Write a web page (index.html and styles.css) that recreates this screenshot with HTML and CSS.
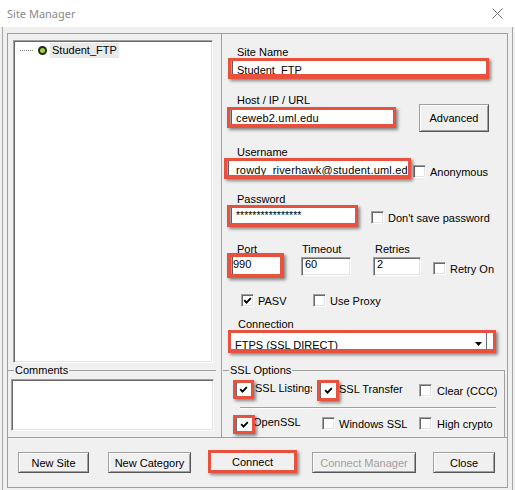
FILE: index.html
```html
<!DOCTYPE html>
<html>
<head>
<meta charset="utf-8">
<title>Site Manager</title>
<link rel="stylesheet" href="styles.css">
</head>
<body>
<div class="titlebar">
  <span class="title">Site Manager</span>
  <svg class="close" width="11" height="11" viewBox="0 0 11 11"><path d="M0.5 0.5L10.5 10.5M10.5 0.5L0.5 10.5" stroke="#6f6f6f" stroke-width="1" fill="none"/></svg>
</div>
<div class="window-body">
  <div class="frame">
    <div class="main">
      <div class="left">
        <div class="tree">
          <div class="tree-item">
            <span class="dots"></span>
            <svg class="node" width="9" height="9" viewBox="0 0 9 9"><circle cx="4.5" cy="4.5" r="3.5" fill="#a6d046" stroke="#1d2b12" stroke-width="2"/></svg>
            <span class="item-label">Student_FTP</span>
          </div>
        </div>
        <div class="group-title comments-title"><span class="gt-text">Comments</span></div>
        <div class="sunken textarea"></div>
      </div>
      <div class="right">
        <div class="lbl">Site Name</div>
        <div class="hl hl-site"><div class="fld fld-low">Student_FTP</div></div>

        <div class="lbl lbl-host">Host / IP / URL</div>
        <div class="row row-host">
          <div class="hl hl-host"><div class="fld fld-host">ceweb2.uml.edu</div></div>
          <div class="btn btn-adv">Advanced</div>
        </div>

        <div class="lbl lbl-user">Username</div>
        <div class="row">
          <div class="hl hl-user"><div class="fld fld-user fld-low">rowdy_riverhawk@student.uml.edu</div></div>
          <div class="chk chk-anon"><span class="cb"></span><span class="cl">Anonymous</span></div>
        </div>

        <div class="lbl lbl-pass">Password</div>
        <div class="row">
          <div class="hl hl-pass"><div class="fld fld-pass">****************</div></div>
          <div class="chk chk-nosave"><span class="cb"></span><span class="cl">Don't save password</span></div>
        </div>

        <div class="row lbl-row">
          <span class="lbl lbl-port">Port</span><span class="lbl lbl-timeout">Timeout</span><span class="lbl lbl-retries">Retries</span>
        </div>
        <div class="row row-nums">
          <div class="hl hl-port"><div class="fld fld-port">990</div></div>
          <div class="sunken edit edit-timeout">60</div>
          <div class="sunken edit edit-retries">2</div>
          <div class="chk chk-retry"><span class="cb"></span><span class="cl">Retry On</span></div>
        </div>

        <div class="row row-pasv">
          <div class="chk chk-pasv"><span class="cb"><svg width="9" height="9" viewBox="0 0 9 9"><path d="M1.2 4.2L3.5 6.6L7.8 2.2" stroke="#000" stroke-width="1.9" fill="none"/></svg></span><span class="cl">PASV</span></div>
          <div class="chk"><span class="cb"></span><span class="cl">Use Proxy</span></div>
        </div>

        <div class="lbl lbl-conn">Connection</div>
        <div class="hl hl-conn">
          <div class="fld fld-combo">FTPS (SSL DIRECT)</div>
          <div class="dd"><svg width="7" height="4" viewBox="0 0 7 4"><path d="M0 0H7L3.5 4Z" fill="#000"/></svg></div>
        </div>

        <div class="ssl">
          <div class="group-title ssl-title"><span class="gt-text">SSL Options</span></div>
          <div class="ssl-body">
            <div class="row ssl-row1">
              <div class="hl hl-cb1"><span class="cbfill"><svg width="9" height="9" viewBox="0 0 9 9"><path d="M1.2 4.2L3.5 6.6L7.8 2.2" stroke="#000" stroke-width="1.9" fill="none"/></svg></span></div>
              <span class="sl sl1">SSL Listings</span>
              <div class="hl hl-cb2"><span class="cbfill"><svg width="9" height="9" viewBox="0 0 9 9"><path d="M1.2 4.2L3.5 6.6L7.8 2.2" stroke="#000" stroke-width="1.9" fill="none"/></svg></span></div>
              <span class="sl sl2">SSL Transfer</span>
              <div class="chk chk-clear"><span class="cb"></span><span class="cl g5">Clear (CCC)</span></div>
            </div>
            <div class="sep"></div>
            <div class="row ssl-row2">
              <div class="hl hl-cb3"><span class="cbfill"><svg width="9" height="9" viewBox="0 0 9 9"><path d="M1.2 4.2L3.5 6.6L7.8 2.2" stroke="#000" stroke-width="1.9" fill="none"/></svg></span></div>
              <span class="sl sl3">OpenSSL</span>
              <div class="chk chk-win"><span class="cb"></span><span class="cl cl-win">Windows SSL</span></div>
              <div class="chk chk-high"><span class="cb"></span><span class="cl g5">High crypto</span></div>
            </div>
          </div>
        </div>
      </div>
    </div>
    <div class="buttons">
      <div class="btn btn-newsite">New Site</div>
      <div class="btn btn-newcat">New Category</div>
      <div class="hl hl-connect"><div class="connect-inner">Connect</div></div>
      <div class="btn btn-cm disabled">Connect Manager</div>
      <div class="btn btn-close">Close</div>
    </div>
  </div>
</div>
</body>
</html>
```

FILE: styles.css
```css
* { box-sizing: border-box; }
html, body { margin: 0; padding: 0; }
body {
  width: 515px;
  height: 490px;
  overflow: hidden;
  background: #f0f0f0;
  font-family: "Liberation Sans", Arial, sans-serif;
  font-size: 11px;
  color: #000;
}

/* title bar */
.titlebar {
  height: 27px;
  background: #fff;
  display: flex;
  align-items: center;
  justify-content: space-between;
  padding: 0 12px 0 7px;
}
.title {
  font-family: "Noto Sans", "Open Sans", sans-serif;
  font-size: 11px;
  color: #8a8a8a;
  margin-top: -1px;
}
.close { display: block; }

/* window */
.window-body {
  height: 463px;
  margin: 0 2px;
  border-left: 1px solid #a8a8a8;
  border-right: 1px solid #a8a8a8;
  padding: 6px 4px 0 4px;
}
.frame {
  width: 501px;
  height: 455px;
  border: 1px solid #a0a0a0;
  display: flex;
  flex-direction: column;
}
.main {
  height: 404px;
  border-bottom: 1px solid #a0a0a0;
  display: flex;
}
.left {
  width: 214px;
  border-right: 1px solid #a0a0a0;
  display: flex;
  flex-direction: column;
}
.right {
  flex: 1;
  padding-top: 12px;
  display: flex;
  flex-direction: column;
  align-items: flex-start;
}
.row { display: flex; align-items: flex-start; }

/* sunken controls */
.sunken {
  background: #fff;
  border: 1px solid;
  border-color: #a0a0a0 #fff #fff #a0a0a0;
  box-shadow: inset 1px 1px 0 #696969, inset -1px -1px 0 #e3e3e3;
}

/* tree */
.tree {
  margin: 6px 0 0 5px;
  width: 200px;
  height: 323px;
  background: #fff;
  border: 1px solid;
  border-color: #a0a0a0 #fff #fff #a0a0a0;
  box-shadow: inset 1px 1px 0 #696969, inset -1px -1px 0 #e3e3e3;
  padding: 2px 0 0 2px;
}
.tree-item { display: flex; align-items: center; height: 15px; }
.dots { width: 13px; margin-left: 4px; border-top: 1px dotted #8a8a8a; }
.node { display: block; margin-left: 5px; }
.item-label {
  margin-left: 3px;
  padding: 0 2px;
  height: 15px;
  line-height: 15px;
  background: #e9e9e9;
}

/* group titles */
.group-title { display: flex; height: 13px; line-height: 13px; white-space: nowrap; }
.group-title::before { content: ""; width: 6px; margin-top: 6px; border-top: 1px solid #a0a0a0; }
.group-title::after { content: ""; flex: 1; margin-top: 6px; border-top: 1px solid #a0a0a0; }
.gt-text { padding: 0 1px; }
.comments-title { margin: 1px 5px 0 0; }
.textarea { margin: 2px 0 0 3px; width: 203px; height: 52px; }

/* labels */
.lbl { height: 12px; line-height: 12px; margin-left: 15px; white-space: nowrap; }
.lbl-host { margin-top: 15px; }
.lbl-user { margin-top: 14px; }
.lbl-pass { margin-top: 14px; }
.lbl-row { margin-top: 16px; }
.lbl-port { width: 65px; }
.lbl-timeout { margin-left: 0; width: 73px; }
.lbl-retries { margin-left: 0; }
.lbl-conn { margin-top: 11px; margin-left: 16px; }

/* red highlight boxes */
.hl {
  position: relative;
  z-index: 1;
  display: flex;
  background: #fff;
  border: 3px solid #e8513e;
  border-bottom-width: 4px;
  box-shadow: 2px 2px 3px rgba(0, 0, 0, 0.45);
}
.fld {
  flex: 1;
  min-width: 0;
  overflow: hidden;
  white-space: nowrap;
  border-left: 1px solid #a0a0a0;
  box-shadow: inset 1px 0 0 #5e5e5e;
  padding: 1px 0 0 5px;
  line-height: 14px;
}
.fld-low { padding-top: 2px; }
.hl-site { margin-left: 6px; width: 261px; height: 21px; border-bottom-width: 5px; }
.row-host { margin-top: -2px; }
.hl-host { margin: 3px 0 0 5px; width: 169px; height: 21px; }
.fld-host { letter-spacing: 0.2px; }
.hl-user { margin-left: 2px; width: 187px; height: 21px; }
.fld-user { padding-left: 8px; letter-spacing: 0.2px; }
.hl-pass { margin-left: 5px; width: 131px; height: 22px; }
.fld-pass { padding-top: 0; font-size: 10.5px; }
.row-nums { margin-top: -2px; }
.hl-port { margin-left: 5px; width: 57px; height: 25px; border-width: 4px; }
.fld-port { padding: 0 0 0 1px; line-height: 15px; }
.hl-conn { margin-left: 6px; width: 268px; height: 23px; }
.fld-combo {
  border-left: none;
  box-shadow: none;
  padding: 4px 0 0 4px;
  line-height: 16px;
}
.dd {
  width: 16px;
  margin-right: 6px;
  border-right: 1px solid #6d6d6d;
  display: flex;
  justify-content: center;
  align-items: flex-start;
  padding-top: 9px;
}
.dd svg { display: block; }

/* buttons */
.btn {
  display: flex;
  align-items: center;
  justify-content: center;
  height: 21px;
  background: #f0f0f0;
  border: 1px solid;
  border-color: #a0a0a0 #555 #555 #a0a0a0;
  box-shadow: inset 1px 1px 0 #fff, inset -1px -1px 0 #a0a0a0;
  white-space: nowrap;
}
.btn-adv { margin-left: 23px; width: 70px; height: 28px; }
.disabled { color: #a0a0a0; }

/* edits */
.edit {
  height: 19px;
  line-height: 13px;
  padding-left: 3px;
}
.edit-timeout { margin: 4px 0 0 17px; width: 50px; }
.edit-retries { margin: 4px 0 0 22px; width: 48px; }

/* checkboxes */
.chk { display: flex; align-items: center; }
.cb {
  flex: none;
  width: 13px;
  height: 13px;
  background: #fff;
  border: 1px solid;
  border-color: #a0a0a0 #fff #fff #a0a0a0;
  box-shadow: inset 1px 1px 0 #696969, inset -1px -1px 0 #e3e3e3;
  display: flex;
  align-items: center;
  justify-content: center;
}
.cb svg { display: block; }
.cl { margin-left: 4px; height: 12px; line-height: 12px; white-space: nowrap; }
.g5 { margin-left: 5px; }
.chk-anon { margin: 7px 0 0 2px; }
.chk-nosave { margin: 6px 0 0 13px; }
.chk-retry { margin: 9px 0 0 12px; }
.row-pasv { margin-top: 16px; }
.chk-pasv { margin-left: 19px; width: 72px; }

/* SSL options */
.ssl {
  margin: 11px 0 0 1px;
  width: 282px;
  display: flex;
  flex-direction: column;
}
.ssl-title::after { border-right: 1px solid #a0a0a0; }
.ssl-body {
  height: 60px;
  border-right: 1px solid #a0a0a0;
  padding-top: 3px;
}
.cbfill {
  flex: 1;
  background: #fff;
  box-shadow: inset 1px 0 0 #6d6d6d;
  display: flex;
  align-items: center;
  justify-content: center;
}
.cbfill svg { display: block; }
.sl { height: 12px; line-height: 12px; white-space: nowrap; overflow: hidden; }
.hl-cb1 { margin-left: 10px; width: 21px; height: 19px; border-bottom-width: 3px; }
.sl1 { width: 57px; margin: 2px 0 0 1px; }
.hl-cb2 { margin-left: 5px; width: 22px; height: 21px; border-bottom-width: 3px; }
.sl2 { width: 80px; margin-top: 3px; }
.chk-clear { margin-top: 4px; }
.sep {
  margin: 6px 0 0 17px;
  width: 256px;
  height: 2px;
  border-top: 1px solid #a0a0a0;
  border-bottom: 1px solid #fff;
}
.ssl-row2 { margin-top: 6px; }
.hl-cb3 { margin-left: 10px; width: 22px; height: 19px; border-bottom-width: 3px; }
.sl3 { width: 69px; margin: 1px 0 0 -2px; }
.chk-win { margin-top: 2px; }
.cl-win { width: 80px; }
.chk-high { margin-top: 2px; }

/* bottom buttons */
.buttons {
  flex: 1;
  display: flex;
  align-items: flex-start;
  padding: 14px 0 0 10px;
}
.btn-newsite { width: 71px; }
.btn-newcat { margin-left: 19px; width: 83px; }
.hl-connect {
  margin: -2px 0 0 17px;
  width: 89px;
  height: 23px;
  border-bottom-width: 3px;
  background: #f0f0f0;
}
.connect-inner {
  flex: 1;
  display: flex;
  align-items: center;
  justify-content: center;
}
.btn-cm { margin-left: 15px; width: 104px; }
.btn-close { margin-left: 17px; width: 62px; }
```
